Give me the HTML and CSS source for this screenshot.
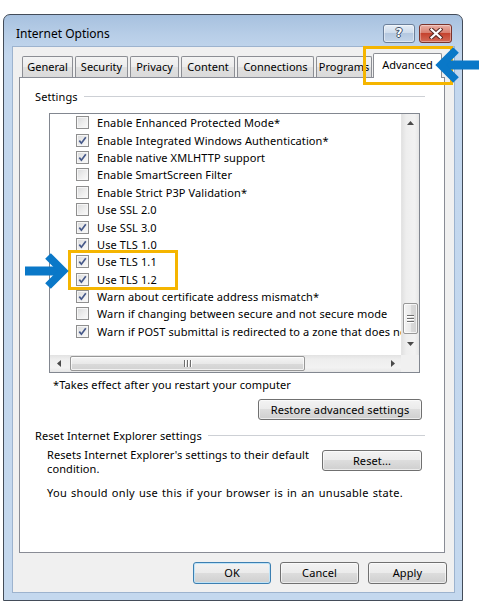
FILE: index.html
```html
<!DOCTYPE html>
<html>
<head>
<meta charset="utf-8">
<title>Internet Options</title>
<link rel="stylesheet" href="styles.css">
</head>
<body>
<div class="window">
  <div class="titlebar">
    <span class="title">Internet Options</span>
    <div class="caption-btns">
      <div class="cbtn help"><span class="qmark">?</span></div>
      <div class="cbtn close">
        <svg width="14" height="11" viewBox="0 0 14 11">
          <path d="M2.5 1.5 L11.5 9.5 M11.5 1.5 L2.5 9.5" stroke="#5a2a24" stroke-width="4.2" stroke-linecap="square" fill="none"/>
          <path d="M2.5 1.5 L11.5 9.5 M11.5 1.5 L2.5 9.5" stroke="#ffffff" stroke-width="2.2" stroke-linecap="square" fill="none"/>
        </svg>
      </div>
    </div>
  </div>
  <div class="client">
    <div class="tabs">
      <div class="tab w-general">General</div>
      <div class="tab w-security">Security</div>
      <div class="tab w-privacy">Privacy</div>
      <div class="tab w-content">Content</div>
      <div class="tab w-connections">Connections</div>
      <div class="tab w-programs">Programs</div>
      <div class="tab active">Advanced</div>
    </div>
    <div class="panel">
      <div class="group-label"><span>Settings</span><i class="rule"></i></div>
      <div class="listbox">
        <div class="items">
          <div class="item"><span class="cb"></span><span>Enable Enhanced Protected Mode*</span></div>
          <div class="item"><span class="cb on"><svg width="9" height="9" viewBox="0 0 9 9"><path d="M1.3 4.6 L3.4 7.2 L7.8 1.2" stroke="#46598a" stroke-width="1.7" fill="none"/></svg></span><span>Enable Integrated Windows Authentication*</span></div>
          <div class="item"><span class="cb on"><svg width="9" height="9" viewBox="0 0 9 9"><path d="M1.3 4.6 L3.4 7.2 L7.8 1.2" stroke="#46598a" stroke-width="1.7" fill="none"/></svg></span><span>Enable native XMLHTTP support</span></div>
          <div class="item"><span class="cb"></span><span>Enable SmartScreen Filter</span></div>
          <div class="item"><span class="cb"></span><span>Enable Strict P3P Validation*</span></div>
          <div class="item"><span class="cb"></span><span>Use SSL 2.0</span></div>
          <div class="item"><span class="cb on"><svg width="9" height="9" viewBox="0 0 9 9"><path d="M1.3 4.6 L3.4 7.2 L7.8 1.2" stroke="#46598a" stroke-width="1.7" fill="none"/></svg></span><span>Use SSL 3.0</span></div>
          <div class="item"><span class="cb on"><svg width="9" height="9" viewBox="0 0 9 9"><path d="M1.3 4.6 L3.4 7.2 L7.8 1.2" stroke="#46598a" stroke-width="1.7" fill="none"/></svg></span><span>Use TLS 1.0</span></div>
          <div class="item"><span class="cb on"><svg width="9" height="9" viewBox="0 0 9 9"><path d="M1.3 4.6 L3.4 7.2 L7.8 1.2" stroke="#46598a" stroke-width="1.7" fill="none"/></svg></span><span>Use TLS 1.1</span></div>
          <div class="item"><span class="cb on"><svg width="9" height="9" viewBox="0 0 9 9"><path d="M1.3 4.6 L3.4 7.2 L7.8 1.2" stroke="#46598a" stroke-width="1.7" fill="none"/></svg></span><span>Use TLS 1.2</span></div>
          <div class="item"><span class="cb on"><svg width="9" height="9" viewBox="0 0 9 9"><path d="M1.3 4.6 L3.4 7.2 L7.8 1.2" stroke="#46598a" stroke-width="1.7" fill="none"/></svg></span><span>Warn about certificate address mismatch*</span></div>
          <div class="item"><span class="cb"></span><span>Warn if changing between secure and not secure mode</span></div>
          <div class="item"><span class="cb on"><svg width="9" height="9" viewBox="0 0 9 9"><path d="M1.3 4.6 L3.4 7.2 L7.8 1.2" stroke="#46598a" stroke-width="1.7" fill="none"/></svg></span><span>Warn if POST submittal is redirected to a zone that does not permit posts</span></div>
        </div>
        <div class="vscroll">
          <div class="sbtn"><svg width="7" height="4" viewBox="0 0 7 4"><polygon points="3.5,0 7,4 0,4" fill="#4a4a4a"/></svg></div>
          <div class="vspace"></div>
          <div class="vthumb"><i></i><i></i><i></i></div>
          <div class="sbtn down"><svg width="7" height="4" viewBox="0 0 7 4"><polygon points="0,0 7,0 3.5,4" fill="#4a4a4a"/></svg></div>
        </div>
        <div class="hscroll">
          <div class="sbtn h"><svg width="4" height="7" viewBox="0 0 4 7"><polygon points="4,0 4,7 0,3.5" fill="#4a4a4a"/></svg></div>
          <div class="hthumb"><i></i><i></i><i></i></div>
          <div class="hspace"></div>
          <div class="sbtn h"><svg width="4" height="7" viewBox="0 0 4 7"><polygon points="0,0 4,3.5 0,7" fill="#4a4a4a"/></svg></div>
        </div>
        <div class="corner"></div>
      </div>
      <div class="note">*Takes effect after you restart your computer</div>
      <div class="restore-row"><div class="btn restore">Restore advanced settings</div></div>
      <div class="group-label second"><span>Reset Internet Explorer settings</span><i class="rule"></i></div>
      <div class="reset-row">
        <p class="reset-text">Resets Internet Explorer's settings to their default<br>condition.</p>
        <div class="btn reset">Reset...</div>
      </div>
      <p class="warn-text">You should only use this if your browser is in an unusable state.</p>
    </div>
    <div class="dialog-btns">
      <div class="btn dlg ok">OK</div>
      <div class="btn dlg">Cancel</div>
      <div class="btn dlg">Apply</div>
    </div>
  </div>
</div>

<div class="callout callout-tab"></div>
<div class="callout callout-tls"></div>
<svg class="arrow arrow-tab" width="45" height="40" viewBox="0 0 45 40">
  <path d="M8 19 H45" stroke="#0a78c8" stroke-width="9" fill="none"/>
  <path d="M21 4 L6 19 L21 34" stroke="#0a78c8" stroke-width="8" fill="none" stroke-linejoin="miter"/>
</svg>
<svg class="arrow arrow-tls" width="48" height="40" viewBox="0 0 48 40">
  <path d="M4 19 H40" stroke="#0a78c8" stroke-width="9" fill="none"/>
  <path d="M27 4 L42 19 L27 34" stroke="#0a78c8" stroke-width="8" fill="none" stroke-linejoin="miter"/>
</svg>
</body>
</html>
```

FILE: styles.css
```css
* { box-sizing: border-box; }

html, body {
  margin: 0;
  padding: 0;
  background: #ffffff;
}

body {
  position: relative;
  width: 479px;
  height: 608px;
  overflow: hidden;
  padding: 14px 0 0 3px;
  font-family: "Noto Sans", "Open Sans", sans-serif;
  font-size: 11px;
  letter-spacing: 0.1px;
  color: #000;
}

/* ---------- window frame ---------- */
.window {
  width: 460px;
  border: 1px solid #434c59;
  border-radius: 7px 7px 0 0;
  background: linear-gradient(#a7c1df 0px, #b9cfe8 22px, #c3d7ee 40px, #c4d8ee 100%);
  padding: 0 7px 7px 8px;
}

.titlebar {
  height: 31px;
  display: flex;
  align-items: center;
  padding: 5px 3px 0 4px;
}

.title {
  font-size: 12px;
  letter-spacing: 0;
  color: #000;
}

.caption-btns {
  margin-left: auto;
  display: flex;
  gap: 4px;
}

.cbtn {
  height: 19px;
  border-radius: 3px;
  display: flex;
  align-items: center;
  justify-content: center;
}

.help {
  width: 32px;
  border: 1px solid #6c809b;
  background: linear-gradient(#e6eef7 0%, #cfdcec 45%, #b5c8e0 50%, #c3d5ea 100%);
  box-shadow: inset 0 0 0 1px rgba(255,255,255,0.45);
}

.qmark {
  font-family: "DejaVu Sans", sans-serif;
  font-weight: 700;
  font-size: 12px;
  line-height: 12px;
  color: #fff;
  text-shadow: 1px 0 0 #3c4d66, -1px 0 0 #3c4d66, 0 1px 0 #3c4d66, 0 -1px 0 #3c4d66;
}

.close {
  width: 33px;
  border: 1px solid #7a332b;
  background: linear-gradient(#eab0a6 0%, #d88070 45%, #c5432f 50%, #d46c58 100%);
  box-shadow: inset 0 0 0 1px rgba(255,255,255,0.35);
}

/* ---------- client area ---------- */
.client {
  width: 443px;
  height: 547px;
  background: #f0f0f0;
  border: 1px solid #9db3ce;
  padding: 7px 7px 8px 6px;
  display: flex;
  flex-direction: column;
}

.tabs {
  position: relative;
  z-index: 2;
  height: 23px;
  display: flex;
  align-items: flex-end;
  gap: 2px;
  padding-left: 3px;
}

.tab {
  height: 21px;
  border: 1px solid #8c8e94;
  border-bottom: none;
  border-radius: 2px 2px 0 0;
  background: linear-gradient(#f4f4f4 0%, #ececec 50%, #e0e0e0 51%, #dadada 100%);
  display: flex;
  align-items: center;
  justify-content: center;
  white-space: nowrap;
  overflow: hidden;
  padding-bottom: 1px;
  letter-spacing: 0;
}

.w-general { width: 51px; }
.w-security { width: 53px; }
.w-privacy { width: 49px; }
.w-content { width: 54px; }
.w-connections { width: 77px; }
.w-programs { width: 56px; }

.tab.active {
  width: 69px;
  height: 25px;
  margin-left: -1px;
  margin-bottom: -1px;
  background: #ffffff;
  padding-bottom: 3px;
}

.panel {
  width: 426px;
  height: 476px;
  border: 1px solid #898c95;
  background: #ffffff;
  padding: 12px 19px 0 15px;
}

.group-label {
  display: flex;
  align-items: center;
  gap: 6px;
  line-height: 13px;
  white-space: nowrap;
}

.rule {
  flex: 1;
  height: 2px;
  border-top: 1px solid #cdd0d5;
  border-bottom: 1px solid #ffffff;
}

/* ---------- list box ---------- */
.listbox {
  margin: 10px 5px 0 14px;
  height: 260px;
  border: 1px solid #828790;
  display: grid;
  grid-template-columns: 1fr 18px;
  grid-template-rows: 1fr 17px;
}

.items {
  overflow: hidden;
  background: #fff;
}

.item {
  height: 17.4px;
  display: flex;
  align-items: center;
  padding-left: 26px;
  white-space: nowrap;
}

.cb {
  flex: none;
  width: 13px;
  height: 13px;
  margin-right: 8px;
  border: 1px solid #8f8f8f;
  background: linear-gradient(135deg, #d9dadb 0%, #eeeeee 55%, #fbfbfb 100%);
  box-shadow: inset 0 0 0 1px #f6f6f6;
  display: flex;
  align-items: center;
  justify-content: center;
}

.vscroll {
  background: linear-gradient(90deg, #e2e2e2 0%, #eeeeee 25%, #f2f2f2 75%, #e6e6e6 100%);
  border-left: 1px solid #e4e4e4;
  display: flex;
  flex-direction: column;
  padding-bottom: 2px;
}

.sbtn {
  flex: none;
  height: 17px;
  display: flex;
  align-items: center;
  justify-content: center;
}

.sbtn.down { height: 18px; }

.sbtn.h {
  height: auto;
  width: 17px;
}

.vspace { flex: 1; }

.vthumb {
  flex: none;
  height: 31px;
  margin: 0 1px 1px 1px;
  border: 1px solid #979797;
  border-radius: 2px;
  background: linear-gradient(90deg, #f4f4f4 0%, #e9e9e9 50%, #dadada 51%, #d2d2d2 100%);
  box-shadow: inset 0 0 0 1px rgba(255,255,255,0.7);
  display: flex;
  flex-direction: column;
  align-items: center;
  justify-content: center;
  gap: 1px;
}

.vthumb i {
  width: 7px;
  height: 2px;
  border-top: 1px solid #6e6e6e;
  border-bottom: 1px solid #ffffff;
}

.hscroll {
  background: linear-gradient(#e2e2e2 0%, #eeeeee 25%, #f2f2f2 75%, #e6e6e6 100%);
  display: flex;
}

.hthumb {
  flex: none;
  width: 235px;
  margin: 1px 0 1px 3px;
  border: 1px solid #979797;
  border-radius: 2px;
  background: linear-gradient(#f4f4f4 0%, #e9e9e9 50%, #dadada 51%, #d2d2d2 100%);
  box-shadow: inset 0 0 0 1px rgba(255,255,255,0.7);
  display: flex;
  align-items: center;
  justify-content: center;
  gap: 1px;
}

.hthumb i {
  width: 2px;
  height: 7px;
  border-left: 1px solid #6e6e6e;
  border-right: 1px solid #ffffff;
}

.hspace { flex: 1; }

.corner { background: #f0f0f0; }

/* ---------- lower panel content ---------- */
.note {
  margin: 5px 0 0 18px;
  line-height: 13px;
  white-space: nowrap;
}

.restore-row {
  margin-top: 8px;
  display: flex;
  justify-content: flex-end;
  padding-right: 3px;
}

.btn {
  height: 21px;
  border: 1px solid #707070;
  border-radius: 3px;
  background: linear-gradient(#f3f3f3 0%, #ebebeb 48%, #dddddd 50%, #cfcfcf 100%);
  box-shadow: inset 0 0 0 1px rgba(255,255,255,0.6);
  display: flex;
  align-items: center;
  justify-content: center;
  white-space: nowrap;
  padding-bottom: 1px;
}

.restore { width: 164px; }

.group-label.second { margin-top: 9px; }

.reset-row {
  margin-top: 6px;
  display: flex;
  align-items: flex-start;
  padding-left: 12px;
  padding-right: 3px;
}

.reset-text {
  margin: 0;
  line-height: 14px;
  white-space: nowrap;
}

.reset {
  margin-top: 2px;
  margin-left: auto;
  width: 100px;
}

.warn-text {
  margin: 10px 0 0 12px;
  line-height: 14px;
  white-space: nowrap;
  letter-spacing: 0.3px;
  word-spacing: 0.8px;
}

/* ---------- dialog buttons ---------- */
.dialog-btns {
  margin-top: 9px;
  display: flex;
  justify-content: flex-end;
  gap: 9px;
}

.dlg {
  width: 79px;
  height: 22px;
}

.ok {
  width: 78px;
  border-color: #3c7fb1;
  box-shadow: inset 0 0 0 1px #bfe3f7;
}

/* ---------- annotation overlays ---------- */
.callout {
  position: absolute;
  border: 3px solid #f5b500;
  z-index: 5;
}

.callout-tab {
  left: 363px;
  top: 46px;
  width: 90px;
  height: 39px;
}

.callout-tls {
  left: 68px;
  top: 250px;
  width: 110px;
  height: 40px;
}

.arrow {
  position: absolute;
  z-index: 6;
}

.arrow-tab {
  left: 435px;
  top: 46px;
}

.arrow-tls {
  left: 21px;
  top: 252px;
}
```
